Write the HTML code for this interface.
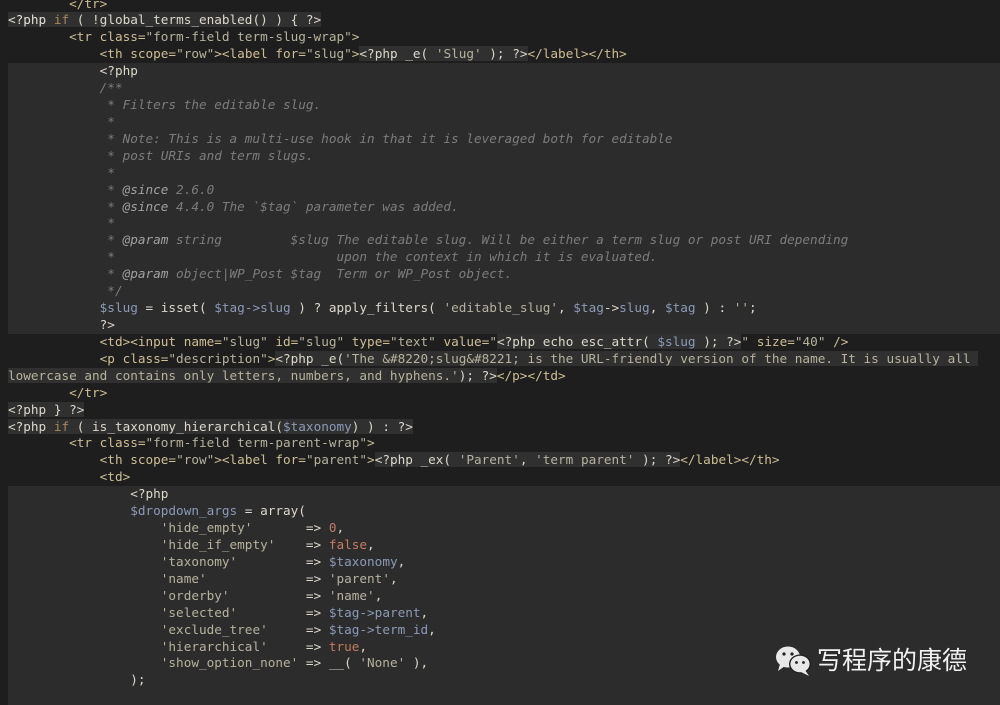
<!DOCTYPE html>
<html><head><meta charset="utf-8"><style>
html,body{margin:0;padding:0;width:1000px;height:705px;overflow:hidden;background:#1e1e1e}
.blk{position:absolute;left:8px;right:0;background:#2c2c2c}
pre{position:absolute;left:8px;top:-4.5px;margin:0;font-family:"DejaVu Sans Mono","Liberation Mono",monospace;font-size:12.7px;line-height:16.92px;color:#dcd8cb;white-space:pre}
.h{background:#303030}
.t{color:#cdbf95}.s{color:#b6b29e}.c{color:#7c7c7c;font-style:italic}.a{color:#a0a0a0;font-style:italic}
.v{color:#8c9ab6}.k{color:#a8865a}.n{color:#c57a62}.p{color:#e4e0d4}
.wm{position:absolute;left:817px;top:643px;font-family:"Noto Sans CJK SC",sans-serif;font-size:25px;color:#f2f2f2;line-height:32px}
</style></head><body>
<div class="blk" style="top:63px;height:271px"></div>
<div class="blk" style="top:486px;height:219px"></div>
<pre>        <span class="t">&lt;/tr&gt;</span>
<span class="h"><span class="p">&lt;?php</span> <span class="k">if</span> ( !global_terms_enabled() ) { ?&gt;</span>
        <span class="t">&lt;tr class=</span><span class="s">"form-field term-slug-wrap"</span><span class="t">&gt;</span>
            <span class="t">&lt;th scope=</span><span class="s">"row"</span><span class="t">&gt;&lt;label for=</span><span class="s">"slug"</span><span class="t">&gt;</span><span class="h">&lt;?php _e( <span class="s">'Slug'</span> ); ?&gt;</span><span class="t">&lt;/label&gt;&lt;/th&gt;</span>
            &lt;?php
            <span class="c">/**</span>
<span class="c">             * Filters the editable slug.</span>
<span class="c">             *</span>
<span class="c">             * Note: This is a multi-use hook in that it is leveraged both for editable</span>
<span class="c">             * post URIs and term slugs.</span>
<span class="c">             *</span>
<span class="c">             * <span class="a">@since</span> 2.6.0</span>
<span class="c">             * <span class="a">@since</span> 4.4.0 The `$tag` parameter was added.</span>
<span class="c">             *</span>
<span class="c">             * <span class="a">@param</span> string         $slug The editable slug. Will be either a term slug or post URI depending</span>
<span class="c">             *                             upon the context in which it is evaluated.</span>
<span class="c">             * <span class="a">@param</span> object|WP_Post $tag  Term or WP_Post object.</span>
<span class="c">             */</span>
            <span class="v">$slug</span> = isset( <span class="v">$tag-&gt;slug</span> ) ? apply_filters( <span class="s">'editable_slug'</span>, <span class="v">$tag</span>-&gt;<span class="v">slug</span>, <span class="v">$tag</span> ) : <span class="s">''</span>;
            ?&gt;
            <span class="t">&lt;td&gt;&lt;input name=</span><span class="s">"slug"</span> <span class="t">id=</span><span class="s">"slug"</span> <span class="t">type=</span><span class="s">"text"</span> <span class="t">value=</span><span class="s">"</span><span class="h">&lt;?php echo esc_attr( <span class="v">$slug</span> ); ?&gt;</span><span class="s">"</span> <span class="t">size=</span><span class="s">"40"</span> <span class="t">/&gt;</span>
            <span class="t">&lt;p class=</span><span class="s">"description"</span><span class="t">&gt;</span><span class="h">&lt;?php _e(<span class="s">'The &amp;#8220;slug&amp;#8221; is the URL-friendly version of the name. It is usually all </span></span>
<span class="h"><span class="s">lowercase and contains only letters, numbers, and hyphens.'</span>); ?&gt;</span><span class="t">&lt;/p&gt;&lt;/td&gt;</span>
        <span class="t">&lt;/tr&gt;</span>
<span class="h">&lt;?php } ?&gt;</span>
<span class="h">&lt;?php <span class="k">if</span> ( is_taxonomy_hierarchical(<span class="v">$taxonomy</span>) ) : ?&gt;</span>
        <span class="t">&lt;tr class=</span><span class="s">"form-field term-parent-wrap"</span><span class="t">&gt;</span>
            <span class="t">&lt;th scope=</span><span class="s">"row"</span><span class="t">&gt;&lt;label for=</span><span class="s">"parent"</span><span class="t">&gt;</span><span class="h">&lt;?php _ex( <span class="s">'Parent'</span>, <span class="s">'term parent'</span> ); ?&gt;</span><span class="t">&lt;/label&gt;&lt;/th&gt;</span>
            <span class="t">&lt;td&gt;</span>
                &lt;?php
                <span class="v">$dropdown_args</span> = array(
                    <span class="s">'hide_empty'</span>       =&gt; <span class="n">0</span>,
                    <span class="s">'hide_if_empty'</span>    =&gt; <span class="n">false</span>,
                    <span class="s">'taxonomy'</span>         =&gt; <span class="v">$taxonomy</span>,
                    <span class="s">'name'</span>             =&gt; <span class="s">'parent'</span>,
                    <span class="s">'orderby'</span>          =&gt; <span class="s">'name'</span>,
                    <span class="s">'selected'</span>         =&gt; <span class="v">$tag-&gt;parent</span>,
                    <span class="s">'exclude_tree'</span>     =&gt; <span class="v">$tag-&gt;term_id</span>,
                    <span class="s">'hierarchical'</span>     =&gt; <span class="n">true</span>,
                    <span class="s">'show_option_none'</span> =&gt; __( <span class="s">'None'</span> ),
                );</pre>
<svg style="position:absolute;left:774px;top:644px" width="40" height="34" viewBox="0 0 40 34">
<ellipse cx="14" cy="13" rx="12" ry="10.5" fill="#e8e8e8"/>
<path d="M6 20 L4 27 L11 22 Z" fill="#e8e8e8"/>
<ellipse cx="26" cy="20" rx="11" ry="9.5" fill="#1e1e1e"/>
<ellipse cx="26" cy="20" rx="9.6" ry="8.3" fill="#e8e8e8"/>
<path d="M31 26 L35 32 L27 28 Z" fill="#e8e8e8"/>
<circle cx="10" cy="10" r="1.6" fill="#1e1e1e"/><circle cx="18" cy="10" r="1.6" fill="#1e1e1e"/>
<circle cx="22.5" cy="18.5" r="1.4" fill="#1e1e1e"/><circle cx="29.5" cy="18.5" r="1.4" fill="#1e1e1e"/>
</svg>
<div class="wm">写程序的康德</div>
</body></html>
